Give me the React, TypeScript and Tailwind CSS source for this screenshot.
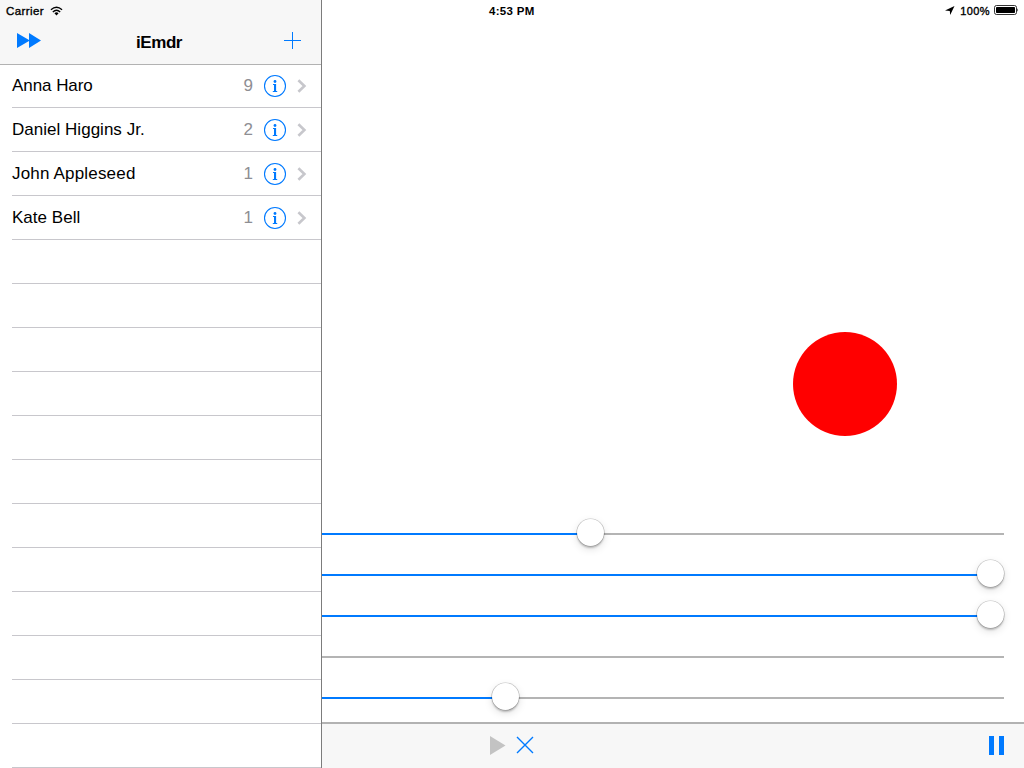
import React from "react";

const people = [
  { name: "Anna Haro", count: 9, spacing: "tracking-[-0.06px]" },
  { name: "Daniel Higgins Jr.", count: 2, spacing: "tracking-[0.02px]" },
  { name: "John Appleseed", count: 1, spacing: "tracking-[0.18px]" },
  { name: "Kate Bell", count: 1, spacing: "tracking-[0.03px]" },
];

const emptyRows = Array.from({ length: 12 }, (_, i) => i);

const sliders: (number | null)[] = [268.5, 668.5, 668.5, null, 183.5];

function InfoIcon() {
  return (
    <svg width="24" height="24" viewBox="0 0 24 24" className="shrink-0">
      <circle cx="12" cy="12" r="10.5" fill="none" stroke="#007aff" strokeWidth="1.1" />
      <circle cx="12" cy="7.5" r="1.4" fill="#007aff" />
      <path d="M10 10h3.1v7.1h1.1v0.9h-4.4v-0.9h1.2v-6.2h-1z" fill="#007aff" />
    </svg>
  );
}

function Sidebar() {
  return (
    <aside className="flex h-full w-[322px] shrink-0 flex-col border-r border-[#7c7c7c] bg-white">
      <header className="flex h-[65px] shrink-0 flex-col border-b border-[#b2b2b2] bg-[#f7f7f7]">
        <div className="flex h-[22px] items-center pl-[6px] text-[11.5px] text-black">
          <span className="w-[44px] pt-px tracking-[0.4px] [-webkit-text-stroke:0.35px_black]">Carrier</span>
          <svg width="13" height="10" viewBox="0 0 14 10" preserveAspectRatio="none">
            <path d="M1 3.8Q7 -1.4 13 3.8" fill="none" stroke="#000" strokeWidth="1.4" />
            <path d="M3 6Q7 2.4 11 6" fill="none" stroke="#000" strokeWidth="1.4" />
            <path d="M4.8 7.2Q7 5.4 9.2 7.2L7 9.4z" fill="#000" />
          </svg>
        </div>
        <div className="grid h-[42px] grid-cols-[70px_1fr_70px] items-center">
          <svg width="24" height="15" viewBox="0 0 24 15" className="ml-[17px] mt-[-5px]">
            <path d="M0 0L12 7L12 0L24 7.5L12 15L12 8L0 15z" fill="#007aff" />
          </svg>
          <h1 className="pr-[3px] text-center text-[17px] font-bold leading-5 tracking-[-0.4px] text-black">iEmdr</h1>
          <svg width="17" height="17" viewBox="0 0 17 17" className="ml-[33px] mt-[-5px]">
            <path d="M0 8.5H17M8.5 0V17" stroke="#007aff" strokeWidth="1" />
          </svg>
        </div>
      </header>
      <ul className="flex flex-col pl-3">
        {people.map((p) => (
          <li
            key={p.name}
            className="flex h-11 items-center border-b border-[#c8c7cc] text-[17px] leading-5 text-black first:h-[43px]"
          >
            <span className={"grow " + p.spacing}>{p.name}</span>
            <span className="mr-[10px] text-[#8e8e93]">{p.count}</span>
            <InfoIcon />
            <svg width="10" height="14" viewBox="0 0 10 14" className="ml-[10px] mr-[14px] shrink-0">
              <path d="M1.4 1.2L7.4 7L1.4 12.8" fill="none" stroke="#c7c7cc" strokeWidth="2.6" />
            </svg>
          </li>
        ))}
        {emptyRows.map((i) => (
          <li key={i} className="h-11 border-b border-[#c8c7cc]" />
        ))}
      </ul>
    </aside>
  );
}

function Slider({ value }: { value: number | null }) {
  return (
    <div className="relative h-[41px] pt-[19px]">
      <div className="h-[2px] w-[681.5px] bg-[#b4b4b4]">
        {value !== null && <div className="h-full bg-[#007aff]" style={{ width: value }} />}
      </div>
      {value !== null && (
        <div
          className="absolute top-[5px] size-[27px] rounded-full bg-white shadow-[0_0_0_0.6px_rgba(0,0,0,0.22),0_2px_2px_rgba(0,0,0,0.22),0_3px_8px_rgba(0,0,0,0.13)]"
          style={{ left: value - 13.5 }}
        />
      )}
    </div>
  );
}

export default function App() {
  return (
    <div className="flex h-[768px] w-[1024px] overflow-hidden bg-white font-['Liberation_Sans',Arial,sans-serif]">
      <Sidebar />
      <main className="relative flex min-w-0 grow flex-col">
        <div className="flex h-[22px] items-center text-[11px] text-black">
          <span className="ml-[167px] pt-[2px] text-[11.5px] font-bold tracking-[0.3px]">4:53 PM</span>
          <div className="ml-auto flex items-center pr-[5px]">
            <svg width="10" height="9" viewBox="0 0 10 9" className="-mt-px mr-[5px]">
              <path d="M9.5 0L5.2 9L4.8 4.9L0 4.6z" fill="#000" />
            </svg>
            <span className="mr-1 mt-px tracking-[0.42px] [-webkit-text-stroke:0.35px_black]">100%</span>
            <svg width="25" height="10" viewBox="0 0 25 10" className="-mt-[2px]">
              <rect x="0.5" y="0.5" width="22" height="9" rx="2" fill="none" stroke="#000" strokeWidth="0.8" />
              <rect x="2" y="2" width="19" height="6" rx="0.8" fill="#000" />
              <path d="M23.4 3.2Q24.8 5 23.4 6.8z" fill="#000" />
            </svg>
          </div>
        </div>
        <div className="relative h-[492px]">
          <div className="absolute left-[471px] top-[310px] size-[104px] rounded-full bg-[#ff0000]" />
        </div>
        <div className="h-[208px] shrink-0">
          {sliders.map((v, i) => (
            <Slider key={i} value={v} />
          ))}
        </div>
        <footer className="flex h-[46px] items-center border-t-2 border-[#b2b2b2] bg-[#f7f7f7] pb-[1px] pl-[168px] pr-5">
          <svg width="16" height="19" viewBox="0 0 16 19" className="mr-[10px]">
            <path d="M0 0L15.5 9.5L0 19z" fill="#c3c3c3" />
          </svg>
          <svg width="18" height="18" viewBox="0 0 18 18" className="-mt-px">
            <path d="M1 1L17 17M17 1L1 17" stroke="#007aff" strokeWidth="1.4" />
          </svg>
          <svg width="15" height="19" viewBox="0 0 15 19" className="ml-auto">
            <path d="M0 0h5v19h-5zM10 0h5v19h-5z" fill="#007aff" />
          </svg>
        </footer>
      </main>
    </div>
  );
}
